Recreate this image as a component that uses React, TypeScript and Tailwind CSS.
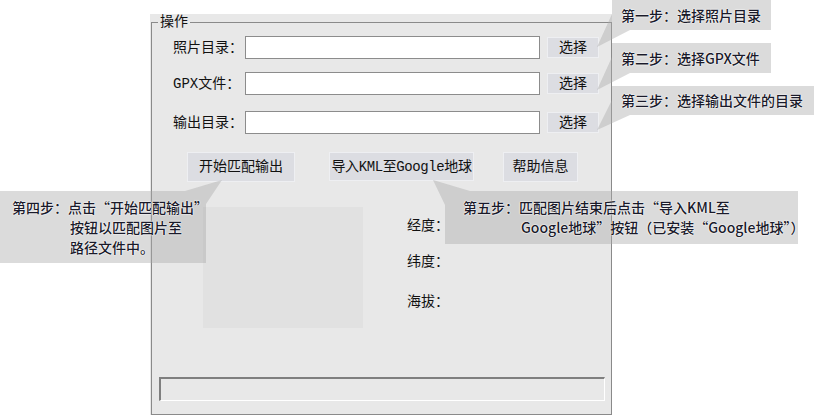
import React from 'react';

const dlgFont = "font-[family-name:'Liberation_Mono','Noto_Sans_CJK_SC',monospace]";
const tipFont = "font-[family-name:'Noto_Sans_CJK_SC','Noto_Sans',sans-serif]";
const halo = '[text-shadow:0_0_2px_#fff,0_0_1px_#fff,0_0_1px_#fff]';

const PathRow = ({ label, className }: { label: string; className: string }) => (
  <div className={`flex items-center h-[23px] pl-[21px] ${className}`}>
    <span className="w-[72px] text-[14px] leading-none text-[#111]">{label}</span>
    <div className="w-[295px] h-[23px] bg-white border border-[#8c8c8c]" />
    <button className="ml-[7px] w-[52px] h-[21px] bg-[#dcdde2] border border-[#eeeff2] text-[14px] leading-none text-[#111]">
      选择
    </button>
  </div>
);

const Tip = ({ className, children }: { className: string; children: React.ReactNode }) => (
  <div
    className={`absolute bg-[rgba(170,170,170,0.42)] ${tipFont} text-[14px] font-medium text-[#1a1a2a] ${halo} ${className}`}
  >
    {children}
  </div>
);

export default function App() {
  return (
    <div className="relative w-[814px] h-[415px] bg-white overflow-hidden">
      {/* dialog */}
      <div className={`ml-[150px] pt-[8px] mt-[14px] w-[462px] h-[401px] bg-[#e8e8e8] pl-[1px] ${dlgFont}`}>
        <div className="relative h-full border border-[#8a8a8a] flex flex-col">
          <span className="absolute -top-[9px] left-[6px] px-[2px] bg-[#e8e8e8] text-[14px] leading-[16px] text-[#111]">
            操作
          </span>

          <PathRow label="照片目录：" className="mt-[13px]" />
          <PathRow label="GPX文件：" className="mt-[13px]" />
          <PathRow label="输出目录：" className="mt-[16px]" />

          <div className="flex mt-[18px] ml-[35px] h-[30px] text-[14px] text-[#111]">
            <button className="w-[108px] h-[30px] bg-[#dcdde2] border border-[#eeeff2] leading-none">开始匹配输出</button>
            <button className="ml-[34px] w-[145px] h-[29px] bg-[#dcdde2] border border-[#eeeff2] leading-none tracking-[-0.4px]">
              导入KML至Google地球
            </button>
            <button className="ml-[29px] w-[75px] h-[30px] bg-[#dcdde2] border border-[#eeeff2] leading-none">帮助信息</button>
          </div>

          <div className="flex mt-[25px] ml-[51px]">
            <div className="w-[160px] h-[121px] bg-[#e1e1e1]" />
            <div className="ml-[44px] flex flex-col text-[14px] leading-[14px] text-[#111]">
              <span className="mt-[12px]">经度：</span>
              <span className="mt-[22px]">纬度：</span>
              <span className="mt-[26px]">海拔：</span>
            </div>
          </div>

          <div className="mt-[49px] ml-[7px] w-[446px] h-[24px] border-t-2 border-l-2 border-t-[#7f7f7f] border-l-[#7f7f7f] border-b border-r border-b-white border-r-white" />
        </div>
      </div>

      {/* callout pointers */}
      <svg className="absolute inset-0 pointer-events-none" width="814" height="415">
        <g fill="rgba(170,170,170,0.42)">
          <polygon points="612,14 612,30 630,30 597,47" />
          <polygon points="612,57 612,73 630,73 597,90" />
          <polygon points="612,100 612,115 630,115 597,130" />
          <polygon points="222,180 185,191 206,191 206,204" />
          <polygon points="433,180 445,205 445,191 470,191" />
        </g>
      </svg>

      <Tip className="left-[612px] top-0 w-[159px] h-[30px] pl-[9px] leading-[30px]">第一步：选择照片目录</Tip>
      <Tip className="left-[612px] top-[43px] w-[159px] h-[30px] pl-[9px] leading-[30px]">第二步：选择GPX文件</Tip>
      <Tip className="left-[612px] top-[86px] w-[202px] h-[29px] pl-[9px] leading-[29px]">第三步：选择输出文件的目录</Tip>
      <Tip className="left-0 top-[191px] w-[206px] h-[72px] pt-[6px] pl-[12px] leading-[20px]">
        <div>第四步：点击“开始匹配输出”</div>
        <div className="pl-[58px]">按钮以匹配图片至</div>
        <div className="pl-[58px]">路径文件中。</div>
      </Tip>
      <Tip className="left-[445px] top-[191px] w-[353px] h-[53px] pt-[6px] pl-[18px] leading-[20px]">
        <div>第五步：匹配图片结束后点击“导入KML至</div>
        <div className="pl-[58px]">Google地球”按钮（已安装“Google地球”）</div>
      </Tip>
    </div>
  );
}
